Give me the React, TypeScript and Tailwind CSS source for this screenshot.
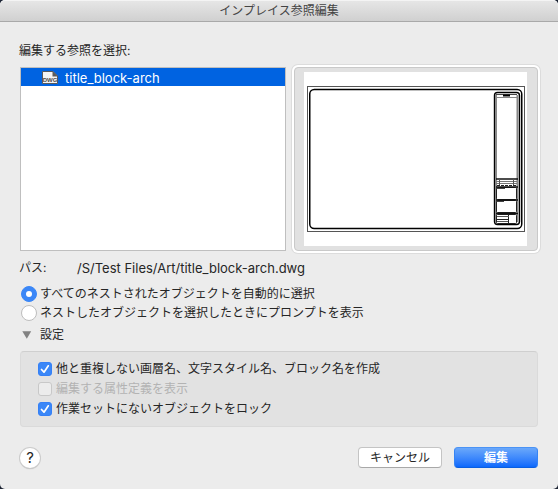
import { ReactNode, useState } from "react";

function DwgIcon() {
  return (
    <svg width="17" height="14" viewBox="0 0 17 14" aria-hidden="true">
      <path d="M0.5 0.5H11L15.5 5V12.5H0.5Z" fill="#f4f4f4" stroke="#5a5a5a" />
      <path d="M10.5 0L16 5.5H10.5Z" fill="#5a5a5a" />
      <text x="8" y="11" textAnchor="middle" fontSize="6" fontWeight="700" fill="#4a4a4a" className="font-['Liberation_Sans',sans-serif]">
        DWG
      </text>
    </svg>
  );
}

function TitleBlockPreview() {
  return (
    <svg
      width="224"
      height="174"
      viewBox="0 0 224 174"
      className="shrink-0"
      role="img"
      aria-label="title_block-arch"
    >
      <rect width="223" height="174" fill="#fff" />
      <g fill="none">
        <rect x="3.5" y="14.5" width="217" height="145" stroke="#555" />
        <rect x="5.75" y="17.5" width="212" height="139" rx="4.5" stroke="#000" strokeWidth="1.5" />
        <rect x="190.5" y="20.5" width="25" height="132" rx="3" stroke="#000" strokeWidth="1.4" />
        <path d="M192 23V150M213.5 23V150" stroke="#888" strokeWidth="2" />
        <path d="M192 22.5H213" stroke="#444" />
        <path d="M199 23.5H206" stroke="#000" strokeWidth="2" />
        <path d="M193 25.5H213" stroke="#888" />
        <path d="M192 107H214" stroke="#111" strokeWidth="1.5" />
        <path d="M192 109.5H213M192 111.5H213" stroke="#777" />
        <path d="M195.5 107V113M209.5 107V113" stroke="#555" />
        <path d="M193 113.5H213" stroke="#222" strokeDasharray="3 1" />
        <rect x="192.5" y="115.5" width="20" height="12" rx="1" stroke="#222" />
        <rect x="192.5" y="128.5" width="20" height="12" rx="1" stroke="#222" />
        <rect x="192.5" y="142.5" width="20" height="9" rx="1" stroke="#222" />
        <path d="M192 115H214M192 128H214M192 141.5H214" stroke="#111" strokeWidth="1.4" />
        <path d="M193 116.5H201M193 129.5H200" stroke="#444" />
        <path d="M204.5 143V151M193 147.5H204" stroke="#222" />
        <path d="M193 144.5H205M193 149.5H204" stroke="#555" />
      </g>
    </svg>
  );
}

function Radio({ label, checked, onSelect }: { label: string; checked: boolean; onSelect: () => void }) {
  return (
    <label className="flex h-[19px] items-center gap-[3px]">
      <span className="grid size-4 place-items-center">
        <input
          type="radio"
          name="nested"
          checked={checked}
          onChange={onSelect}
          className="col-start-1 row-start-1 size-4 appearance-none rounded-full border border-[#bdbdbd] bg-white checked:border-[#3b87f7] checked:bg-[#3b87f7]"
        />
        {checked && <span className="pointer-events-none col-start-1 row-start-1 size-1.5 rounded-full bg-white" />}
      </span>
      {label}
    </label>
  );
}

function Check({ children, initial = false, disabled = false }: { children: ReactNode; initial?: boolean; disabled?: boolean }) {
  const [on, setOn] = useState(initial);
  return (
    <label className={`flex h-5 items-center gap-1 ${disabled ? "text-[#b3b3b3]" : ""}`}>
      <span className="grid size-3.5 place-items-center">
        <input
          type="checkbox"
          checked={on}
          disabled={disabled}
          onChange={() => setOn(!on)}
          className="col-start-1 row-start-1 size-3.5 appearance-none rounded-[3px] border border-[#b8b8b8] bg-white checked:border-[#3580f6] checked:bg-[#3b87f7] disabled:border-[#c8c8c8] disabled:bg-[#ececec]"
        />
        {on && (
          <svg width="14" height="14" viewBox="0 0 14 14" className="pointer-events-none col-start-1 row-start-1" aria-hidden="true">
            <path d="M3.5 7.5L6 10.2L10.3 3.8" fill="none" stroke="#fff" strokeWidth="1.7" strokeLinecap="round" strokeLinejoin="round" />
          </svg>
        )}
      </span>
      {children}
    </label>
  );
}

export default function App() {
  const [mode, setMode] = useState("auto");
  const [open, setOpen] = useState(true);
  return (
    <div className="min-h-screen bg-[#1c2434]">
      <div className="flex min-h-screen flex-col rounded-[5px] bg-[#ececec] font-['Inter','Noto_Sans_CJK_JP',sans-serif] text-xs leading-4 text-[#262626]">
        <header className="flex h-[22px] items-center justify-center rounded-t-[5px] border-t border-b border-t-[#f4f4f4] border-b-[#a9a9a9] bg-linear-to-b from-[#e6e6e6] to-[#d0d0d0]">
          <h1 className="text-[#444]">インプレイス参照編集</h1>
        </header>
        <main className="flex flex-col px-5 pt-[21px] pb-5">
          <h2 id="list-label" className="-ml-px">編集する参照を選択:</h2>
          <div className="mt-2 grid grid-cols-[266fr_244fr] gap-2">
            <ul role="listbox" aria-labelledby="list-label" className="h-[184px] border border-[#bfbfbf] bg-white">
              <li role="option" aria-selected="true" className="flex h-[18px] items-center gap-1.5 bg-[#0063e1] pt-0.5 pl-[21px] text-[13px] text-white">
                <DwgIcon />
                title_block-arch
              </li>
            </ul>
            <div className="flex h-[184px] items-center justify-center rounded-sm border border-[#c9c9c9] bg-[#e1e1e1] shadow-[0_0_0_2px_#fff,0_0_0_3px_#dcdcdc]">
              <TitleBlockPreview />
            </div>
          </div>
          <dl className="-ml-px mt-[9px] flex">
            <dt className="w-[58px]">パス:</dt>
            <dd className="text-[13px]">/S/Test Files/Art/title_block-arch.dwg</dd>
          </dl>
          <div role="radiogroup" className="mt-2 pl-px">
            <Radio label="すべてのネストされたオブジェクトを自動的に選択" checked={mode === "auto"} onSelect={() => setMode("auto")} />
            <Radio label="ネストしたオブジェクトを選択したときにプロンプトを表示" checked={mode === "prompt"} onSelect={() => setMode("prompt")} />
          </div>
          <button type="button" aria-expanded={open} onClick={() => setOpen(!open)} className="mt-[5px] flex items-center gap-2 self-start pl-0.5">
            <svg width="10" height="8" viewBox="0 0 10 8" aria-hidden="true">
              <path d="M0.3 0.3H9.2L4.8 7.8Z" fill="#828282" />
            </svg>
            設定
          </button>
          {open && (
            <section className="mt-2 rounded-sm border border-[#dadada] border-t-[#cfcfcf] bg-[#e2e2e2] px-[17px] py-[7px]">
              <Check initial>他と重複しない画層名、文字スタイル名、ブロック名を作成</Check>
              <Check disabled>編集する属性定義を表示</Check>
              <Check initial>作業セットにないオブジェクトをロック</Check>
            </section>
          )}
          <footer className="mt-5 flex items-center gap-3">
            <button type="button" aria-label="ヘルプ" className="mr-auto size-5 rounded-full bg-white text-[15px] shadow-[0_0_0_1px_#cccccc,0_1px_1px_#999]">
              ?
            </button>
            <button type="button" className="h-[21px] w-[84px] rounded-sm border border-[#c4c4c4] border-b-[#a8a8a8] bg-white">
              キャンセル
            </button>
            <button type="button" className="h-[21px] w-[84px] rounded-sm border border-t-[#4b93f5] border-x-[#3584f5] border-b-[#0a5ee0] bg-linear-to-b from-[#6aa8fa] to-[#0a68fc] font-bold text-white">
              編集
            </button>
          </footer>
        </main>
      </div>
    </div>
  );
}
